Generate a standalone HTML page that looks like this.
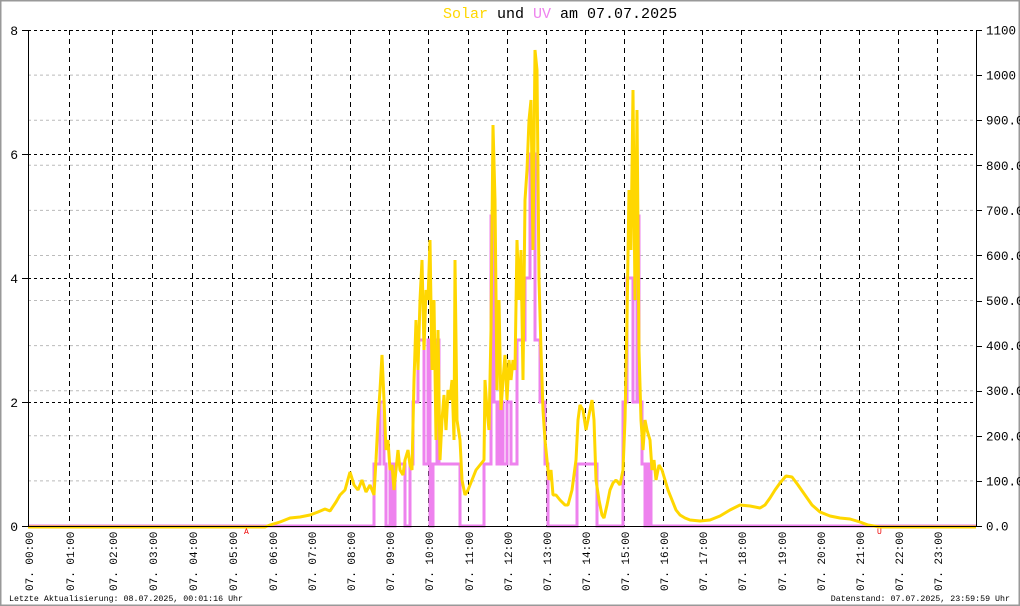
<!DOCTYPE html>
<html><head><meta charset="utf-8"><style>
html,body{margin:0;padding:0;background:#fff}
svg{display:block}
text{font-family:"Liberation Mono","DejaVu Sans Mono",monospace}
</style></head><body>
<svg width="1020" height="606" xmlns="http://www.w3.org/2000/svg">
<rect x="0.5" y="0.5" width="1019" height="605" fill="#fff" stroke="#999" stroke-width="2"/>
<text x="443" y="18" font-size="15" fill="#000"><tspan fill="#ffd700">Solar</tspan> und <tspan fill="#ee82ee">UV</tspan> am 07.07.2025</text>
<g stroke="#bbb" stroke-dasharray="3,3" stroke-width="1">
<line x1="28" x2="976" y1="480.9" y2="480.9"/><line x1="28" x2="976" y1="435.8" y2="435.8"/><line x1="28" x2="976" y1="390.7" y2="390.7"/><line x1="28" x2="976" y1="345.6" y2="345.6"/><line x1="28" x2="976" y1="300.5" y2="300.5"/><line x1="28" x2="976" y1="255.5" y2="255.5"/><line x1="28" x2="976" y1="210.4" y2="210.4"/><line x1="28" x2="976" y1="165.3" y2="165.3"/><line x1="28" x2="976" y1="120.2" y2="120.2"/><line x1="28" x2="976" y1="75.1" y2="75.1"/>
</g>
<g stroke="#000" stroke-dasharray="3,3" stroke-width="1">
<line x1="28" x2="976" y1="30.5" y2="30.5"/><line x1="28" x2="976" y1="154.5" y2="154.5"/><line x1="28" x2="976" y1="278.5" y2="278.5"/><line x1="28" x2="976" y1="402.5" y2="402.5"/>
</g>
<g stroke="#000" stroke-dasharray="5,4" stroke-width="1" id="vg"></g>
<g font-size="11" fill="#000" id="xl"></g>
<polyline fill="none" stroke="#ee82ee" stroke-width="3" points="28,526 374,526 374,464 380,464 380,402 384,402 384,464 386,464 386,526 390,526 390,464 392,464 392,526 395,526 395,464 405,464 405,526 410,526 410,464 413,464 413,402 418,402 418,340 424,340 424,464 428,464 428,340 430,340 430,526 433,526 433,464 437,464 437,340 439,340 439,464 460,464 460,526 484,526 484,464 491,464 491,216 494,216 494,402 497,402 497,464 500,464 500,402 503,402 503,464 507,464 507,402 511,402 511,464 517,464 517,340 525,340 525,278 530,278 530,154 535,154 535,340 540,340 540,402 545,402 545,464 548,464 548,526 577,526 577,464 597,464 597,526 623,526 623,402 627,402 627,278 633,278 633,402 637,402 637,216 639,216 639,402 642,402 642,464 645,464 645,526 648,526 648,464 651,464 651,526 976,526"/>
<polyline fill="none" stroke="#ffd700" stroke-width="3" stroke-linejoin="bevel" points="28,527 265,527 270,525 280,522 290,518 300,517 310,515 318,512 325,509 330,511 336,502 340,495 345,490 350,472 354,485 358,490 362,480 366,492 370,485 374,495 376,460 378,420 380,390 382,355 384,400 386,450 388,440 390,470 392,465 394,490 396,470 398,450 400,470 403,475 405,460 408,450 410,465 412,470 414,380 416,320 418,370 420,300 422,260 424,350 426,290 428,300 430,240 432,370 434,300 436,440 438,330 440,460 442,420 444,395 446,430 448,390 450,400 452,380 454,440 455,260 457,420 460,440 462,480 465,495 468,490 472,480 476,470 480,465 484,460 485,380 487,410 489,430 491,330 493,125 495,200 497,390 499,300 501,410 503,380 505,355 507,400 509,360 511,380 513,360 515,370 517,240 519,300 521,250 523,380 525,200 527,170 529,120 531,100 533,250 535,50 537,70 539,280 541,350 543,410 545,440 547,460 549,480 551,470 553,495 556,495 560,500 565,505 568,505 572,490 576,460 578,420 580,405 583,410 586,430 588,420 590,410 592,400 594,420 596,480 599,500 602,515 604,518 607,505 610,490 613,483 616,480 620,485 623,470 625,420 627,320 629,190 631,250 633,90 635,300 637,110 639,350 641,420 643,450 645,420 647,430 650,440 652,470 654,460 656,480 659,465 662,470 665,480 668,490 672,500 676,510 680,515 685,518 690,520 700,521 710,520 720,516 730,510 740,505 750,506 760,508 765,505 770,498 775,490 780,483 786,476 792,477 798,485 805,495 812,505 820,512 830,516 840,518 850,519 860,522 868,525 880,527 976,527"/>
<line x1="28.5" y1="30" x2="28.5" y2="527" stroke="#000"/>
<line x1="976.5" y1="30" x2="976.5" y2="527" stroke="#000"/>
<line x1="28" y1="526.5" x2="976" y2="526.5" stroke="#000"/>
<g stroke="#000">
<line x1="22" x2="28" y1="30.5" y2="30.5"/><line x1="22" x2="28" y1="154.5" y2="154.5"/><line x1="22" x2="28" y1="278.5" y2="278.5"/><line x1="22" x2="28" y1="402.5" y2="402.5"/><line x1="22" x2="28" y1="526.5" y2="526.5"/>
</g>
<g font-size="13" fill="#000" text-anchor="end">
<text x="18" y="35">8</text><text x="18" y="159">6</text><text x="18" y="283">4</text><text x="18" y="407">2</text><text x="18" y="531">0</text>
</g>
<g id="rt" stroke="#000"></g>
<g id="rl" font-size="12.5" fill="#000"></g>
<text x="244" y="534" font-size="8" fill="#e00">A</text>
<text x="877" y="534" font-size="8" fill="#e00">U</text>
<text x="9" y="601" font-size="8.3" fill="#000">Letzte Aktualisierung: 08.07.2025, 00:01:16 Uhr</text>
<text x="1010" y="601" font-size="8.3" fill="#000" text-anchor="end">Datenstand: 07.07.2025, 23:59:59 Uhr</text>
</svg>
<script>
var ns="http://www.w3.org/2000/svg";
var vg=document.getElementById("vg"),xl=document.getElementById("xl"),rt=document.getElementById("rt"),rl=document.getElementById("rl");
var first=[28,69,112,152,192,232,272];
for(var h=0;h<24;h++){var x=h<=6?first[h]:272+39.12*(h-6);
 if(h>0){var l=document.createElementNS(ns,"line");l.setAttribute("x1",Math.round(x)+.5);l.setAttribute("x2",Math.round(x)+.5);l.setAttribute("y1",30);l.setAttribute("y2",526);vg.appendChild(l);}
 var t=document.createElementNS(ns,"text");var hh=(h<10?"0":"")+h;t.textContent="07. "+hh+":00";
 t.setAttribute("transform","translate("+(Math.round(x)+5)+",591) rotate(-90)");xl.appendChild(t);}
var labs=["0.0","100.0","200.0","300.0","400.0","500.0","600.0","700.0","800.0","900.0","1000","1100"];
for(var k=0;k<12;k++){var y=526-45.09*k;
 var l=document.createElementNS(ns,"line");l.setAttribute("x1",976);l.setAttribute("x2",982);l.setAttribute("y1",Math.round(y)+.5);l.setAttribute("y2",Math.round(y)+.5);rt.appendChild(l);
 var t=document.createElementNS(ns,"text");t.setAttribute("x",986);t.setAttribute("y",y+4.5);t.textContent=labs[k];rl.appendChild(t);}
</script>
</body></html>
